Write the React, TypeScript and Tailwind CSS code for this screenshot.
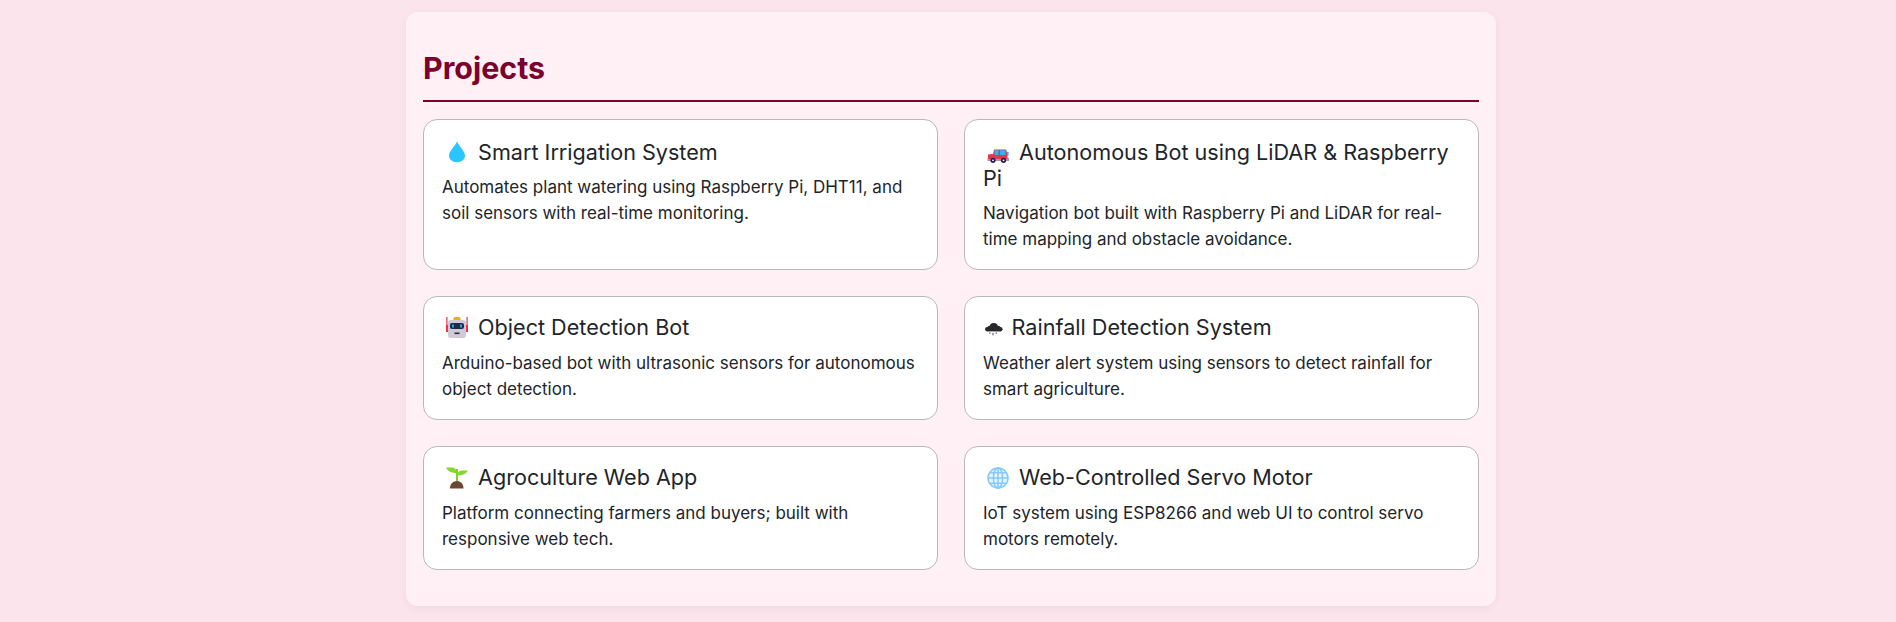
import type { ReactNode } from "react";

function Ico({ w, children }: { w: number; children: ReactNode }) {
  return (
    <svg width={w} height="26" viewBox={`0 0 ${Math.round(w)} 26`} className="inline-block align-[-5px]" aria-hidden="true">
      {children}
    </svg>
  );
}

const Drop = () => (
  <Ico w={30}>
    <path d="M15 2.5C13.5 6.5 7 12 7 16.5C7 20.5 10.5 23.2 15 23.2C19.5 23.2 23 20.5 23 16.5C23 12 16.5 6.5 15 2.5Z" fill="#2bc6ff" />
  </Ico>
);

const Car = () => (
  <Ico w={30}>
    <rect x="4.5" y="19" width="21.5" height="3" fill="#9e9ea6" />
    <path d="M5 15.5L10 15L11 10.5H23L24.5 15V20H5Z" fill="#ee3344" />
    <rect x="11.5" y="11.2" width="4" height="4.8" fill="#29b6f6" />
    <rect x="17" y="11.2" width="5.5" height="4.8" fill="#29b6f6" />
    <rect x="24" y="13" width="1.6" height="3.5" fill="#29b6f6" />
    <circle cx="10" cy="21.3" r="2.6" fill="#2d1b4e" />
    <circle cx="10" cy="21.3" r="0.9" fill="#ffffff" />
    <circle cx="20.5" cy="21.3" r="2.6" fill="#2d1b4e" />
    <circle cx="20.5" cy="21.3" r="0.9" fill="#ffffff" />
  </Ico>
);

const Robot = () => (
  <Ico w={30}>
    <rect x="11.5" y="3" width="7" height="4" rx="1.5" fill="#f5a623" />
    <rect x="4.3" y="3" width="1.2" height="15" fill="#ef3340" />
    <rect x="24.5" y="3" width="1.2" height="15" fill="#ef3340" />
    <rect x="4" y="11" width="2" height="7" fill="#ef3340" />
    <rect x="24" y="11" width="2" height="7" fill="#ef3340" />
    <rect x="6" y="6" width="18" height="18" rx="3" fill="#cfc9d8" />
    <rect x="8" y="9" width="14" height="6" rx="2" fill="#1f2a44" />
    <rect x="10" y="10.5" width="2" height="3" fill="#1ea7f2" />
    <rect x="18" y="10.5" width="2" height="3" fill="#1ea7f2" />
    <rect x="12.5" y="18.5" width="5" height="1.6" fill="#2b2b33" />
  </Ico>
);

const Cloud = () => (
  <Ico w={22.5}>
    <g fill="#26282c">
      <circle cx="11" cy="13" r="4.2" />
      <circle cx="7" cy="14.4" r="2.8" />
      <circle cx="15.2" cy="14.4" r="2.8" />
      <circle cx="4.3" cy="15.3" r="2.2" />
      <circle cx="17.8" cy="15.3" r="2.2" />
      <rect x="4.3" y="14" width="13.5" height="3.5" />
    </g>
    <path d="M7 18.5V20M10.2 19V21.5M13.5 18.5V20" stroke="#4a4a4a" strokeWidth="1" />
  </Ico>
);

const Sprout = () => (
  <Ico w={30}>
    <path d="M14 18V5H16V18Z" fill="#7ed321" />
    <path d="M4 3.5H10C13 3.5 15 6 15 9C11 9 6 8 4 3.5Z" fill="#86d62c" />
    <path d="M26 6.5H20C17 6.5 15.5 8.5 15 11.5C19 11.5 24 10.5 26 6.5Z" fill="#86d62c" />
    <path d="M8 24.5C8 21 10 17 15 17C19.5 17 21.5 21 21.5 24.5Z" fill="#6d4733" />
  </Ico>
);

const Globe = () => (
  <Ico w={30}>
    <g fill="none" stroke="#85c8fb" strokeWidth="1.5">
      <circle cx="15" cy="14" r="10" fill="#e8f5fe" />
      <ellipse cx="15" cy="14" rx="4.6" ry="10" />
      <path d="M15 4V24M5 14H25M6.5 8.8H23.5M6.5 19.2H23.5" />
    </g>
  </Ico>
);

const projects = [
  { e: <Drop />, t: "Smart Irrigation System", d: "Automates plant watering using Raspberry Pi, DHT11, and soil sensors with real-time monitoring.", c: "pt-[19px]", m: "mb-[9px]" },
  { e: <Car />, t: "Autonomous Bot using LiDAR & Raspberry Pi", d: "Navigation bot built with Raspberry Pi and LiDAR for real-time mapping and obstacle avoidance.", c: "pt-[19px]", m: "mb-[9px]" },
  { e: <Robot />, t: "Object Detection Bot", d: "Arduino-based bot with ultrasonic sensors for autonomous object detection.", c: "pt-[17px]", m: "mb-[10px]" },
  { e: <Cloud />, t: "Rainfall Detection System", d: "Weather alert system using sensors to detect rainfall for smart agriculture.", c: "pt-[17px]", m: "mb-[10px]" },
  { e: <Sprout />, t: "Agroculture Web App", d: "Platform connecting farmers and buyers; built with responsive web tech.", c: "pt-[17px]", m: "mb-[10px]" },
  { e: <Globe />, t: "Web-Controlled Servo Motor", d: "IoT system using ESP8266 and web UI to control servo motors remotely.", c: "pt-[17px]", m: "mb-[10px]" },
];

export default function App() {
  return (
    <div className="min-h-[622px] bg-[#fce4ec] pt-3 pl-[6px] font-['Inter','Noto_Sans',sans-serif] text-[#212529]">
      <section className="mx-auto h-[594px] w-[1090px] rounded-xl bg-[#fff0f5] px-[17px] pt-[32px] shadow-[0_2px_8px_rgba(0,0,0,0.05)]">
        <h2 className="border-b-2 border-[#7b002c] pb-[8px] text-[30.4px] leading-[48px] font-bold text-[#7b002c]">Projects</h2>
        <div className="mt-[17px] grid grid-cols-2 grid-rows-[151px_124px_124px] gap-x-[26px] gap-y-[26px]">
          {projects.map((p) => (
            <div key={p.t} className={`rounded-[14px] border border-[#b8b8b8] bg-white px-[18px] pb-[16px] ${p.c}`}>
              <h3 className={`text-[21.6px] leading-[26px] font-normal ${p.m}`}>{p.e} {p.t}</h3>
              <p className="text-[17px] leading-[26px]">{p.d}</p>
            </div>
          ))}
        </div>
      </section>
    </div>
  );
}
